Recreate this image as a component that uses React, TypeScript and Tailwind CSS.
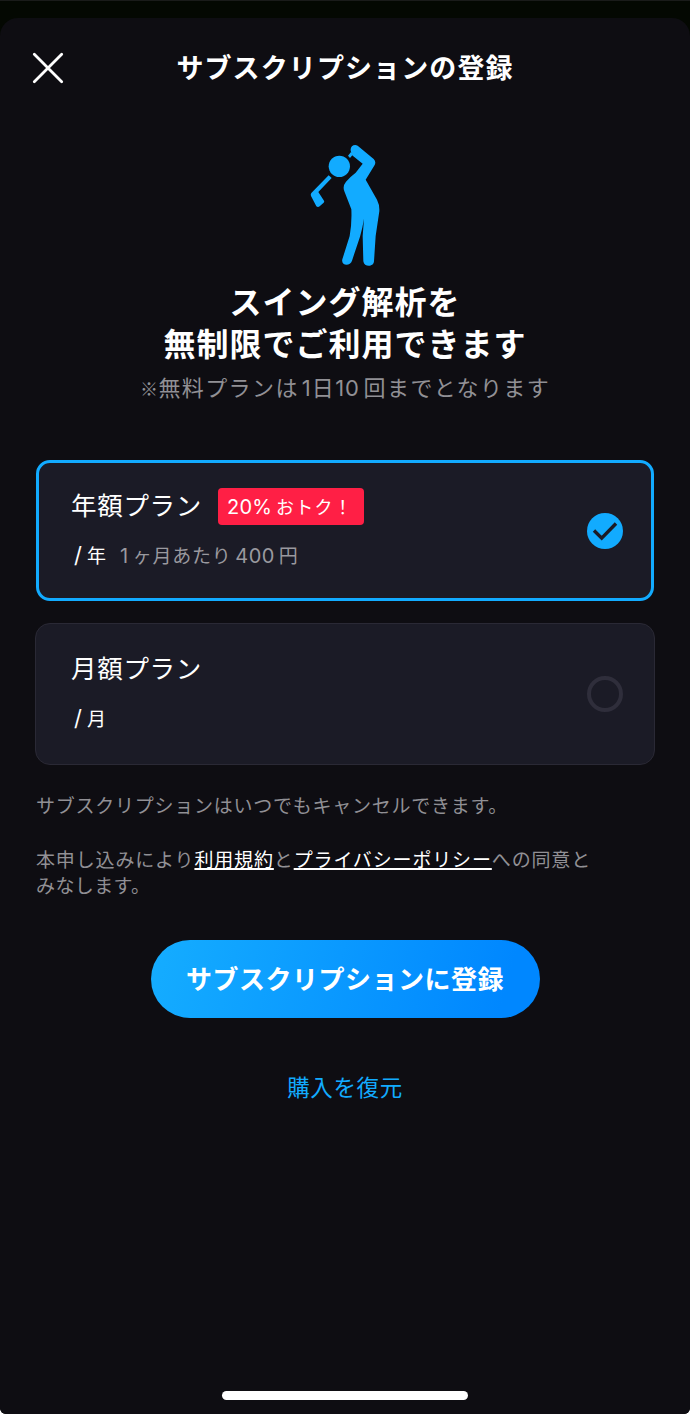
import React, { useState } from "react";
import clsx from "clsx";

type Plan = "year" | "month";

const CloseIcon = () => {
  return (
    <svg className="h-8 w-8" viewBox="0 0 32 32" fill="none" stroke="white" strokeWidth={2.8} strokeLinecap="round">
      <path d="M2.3 2.3 29.7 29.7M29.7 2.3 2.3 29.7" />
    </svg>
  );
};

const GolferIcon = () => {
  return (
    <svg className="h-[124px] w-[70px] shrink-0" viewBox="60 39 210 372" fill="#12abff">
      <circle cx="148" cy="109" r="32" />
      {/* club */}
      <path d="M116 136 125 144 85 186 102 212Q104 215 101 218L89 229Q84 233 79 229L63 198Q61 194 64 189Z" />
      <path d="M174 77 183 66 196 72 190 79 187 76 180 84Z" />
      {/* body */}
      <path d="M183 65C178 52 190 41 203 47L251 87Q259 95 254 105L227 149 261 209Q269 224 268 244L257 318 252 394C251 412 222 412 220 394L218 318 222 266 Q218 292 210 320L186 392C181 410 152 408 157 388L179 318Q186 280 184 238L163 184Q157 168 168 155 181 140 197 128L218 101 190 79Z" />
    </svg>
  );
};

const CheckMark = ({ checked }: { checked: boolean }) => {
  if (!checked) {
    return <span className="h-9 w-9 shrink-0 rounded-full border-4 border-[#2f2e3b]" />;
  }
  return (
    <svg className="h-9 w-9 shrink-0" viewBox="0 0 36 36" fill="none">
      <circle cx="18" cy="18" r="18" fill="#12abff" />
      <path d="M7 17.5 14.7 25.2 29 10.5" stroke="#1b1b26" strokeWidth={3.4} />
    </svg>
  );
};

type PlanCardProps = {
  title: string;
  unit: string;
  checked: boolean;
  onSelect: () => void;
  badge?: React.ReactNode;
  note?: React.ReactNode;
};

const PlanCard = ({ title, unit, checked, onSelect, badge, note }: PlanCardProps) => {
  return (
    <button
      type="button"
      onClick={onSelect}
      className={clsx(
        "flex items-center justify-between bg-[#1b1b26] text-left",
        checked ? "mx-px h-[141px] rounded-[14px] border-[3px] border-[#12abff] pr-7 pl-8" : "h-[142px] rounded-[15px] border border-[#2a2935] pr-[31px] pl-[35px]"
      )}
    >
      <span className="flex flex-col gap-3">
        <span className="flex h-[38px] items-center">
          <span className="w-[147px] pb-[3px] text-[25.5px] tracking-[0.7px] whitespace-nowrap">{title}</span>
          {badge}
        </span>
        <span className="flex h-[38px] items-baseline pt-0.5 text-[19px] whitespace-nowrap">
          <span className="w-[49px] pl-[3px]">
            <span className="mr-[5px] font-[Inter] text-[22px]">/</span>
            {unit}
          </span>
          {note}
        </span>
      </span>
      <CheckMark checked={checked} />
    </button>
  );
};

export default function App() {
  const [plan, setPlan] = useState<Plan>("year");

  return (
    <div className="h-[1414px] w-[690px] bg-white font-['Noto_Sans_CJK_JP',sans-serif] text-white">
      <div className="h-full overflow-hidden rounded-b-[6px] border-t border-[#1a1b1a] bg-[#040802] pt-[17px]">
        <div className="flex h-full flex-col rounded-t-[18px] bg-[#0e0d12]">
          <header className="grid h-[100px] shrink-0 grid-cols-[96px_1fr_96px] items-center">
            <button type="button" className="pl-8" aria-label="閉じる">
              <CloseIcon />
            </button>
            <h1 className="pb-0.5 text-center text-[27px] font-bold tracking-[1.1px] whitespace-nowrap">サブスクリプションの登録</h1>
          </header>

          <div className="mt-[25px] flex flex-col items-center">
            <GolferIcon />
            <h2 className="mt-3 text-center text-[32px] leading-[42px] font-bold tracking-[1px]">
              スイング解析を
              <br />
              無制限でご利用できます
            </h2>
            <p className="mt-[5px] h-9 text-[22px] leading-9 tracking-[1.4px] whitespace-nowrap text-[#919095]">
              <span className="text-[18px] font-bold tracking-[0.5px]">※</span>無料プランは
              <span className="ml-[3px] font-[Inter] tracking-[1px]">1</span>日
              <span className="mr-1 font-[Inter] tracking-[0.8px]">10</span>回までとなります
            </p>
          </div>

          <div className="mx-[35px] mt-14 flex flex-col gap-[22px]">
            <PlanCard
              title="年額プラン"
              unit="年"
              checked={plan === "year"}
              onSelect={() => setPlan("year")}
              badge={
                <span className="mt-px h-[37px] w-[146px] rounded-[4px] bg-[#ff1f45] pl-[9px] text-[18px] leading-[36px] tracking-[1.2px]">
                  <span className="mr-1 font-[Inter] text-[20px] tracking-[0.2px]">20%</span>おトク！
                </span>
              }
              note={
                <span className="tracking-[0.7px] text-[#9a999f]">
                  <span className="mr-1 font-[Inter] text-[20px]">1</span>ヶ月あたり<span className="mx-1 font-[Inter] text-[20px] tracking-[0.4px]">400</span>円
                </span>
              }
            />
            <PlanCard title="月額プラン" unit="月" checked={plan === "month"} onSelect={() => setPlan("month")} />
          </div>

          <div className="mt-[27px] ml-9 text-[19px] leading-[26px] tracking-[0.85px] whitespace-nowrap text-[#919095]">
            <p className="tracking-[0.75px]">サブスクリプションはいつでもキャンセルできます。</p>
            <p className="mt-[28px]">
              本申し込みにより
              <a className="text-white underline decoration-2 underline-offset-1 [text-decoration-skip-ink:none]">利用規約</a>と
              <a className="text-white underline decoration-2 underline-offset-1 [text-decoration-skip-ink:none]">プライバシーポリシー</a>
              への同意と
              <br />
              <span className="tracking-[0.4px]">みなします。</span>
            </p>
          </div>

          <button
            type="button"
            className="mt-[42px] h-[78px] w-[389px] shrink-0 self-center rounded-full bg-linear-[105deg,#15adff,#0087ff_90%] pb-[3px] text-[26px] font-bold tracking-[0.5px]"
          >
            サブスクリプションに登録
          </button>
          <button type="button" className="mt-[50px] h-9 self-center text-[22.5px] leading-9 tracking-[0.6px] text-[#12abff]">
            購入を復元
          </button>

          <div className="mt-auto mb-[14px] h-[9px] w-[246px] shrink-0 self-center rounded-full bg-white" />
        </div>
      </div>
    </div>
  );
}
